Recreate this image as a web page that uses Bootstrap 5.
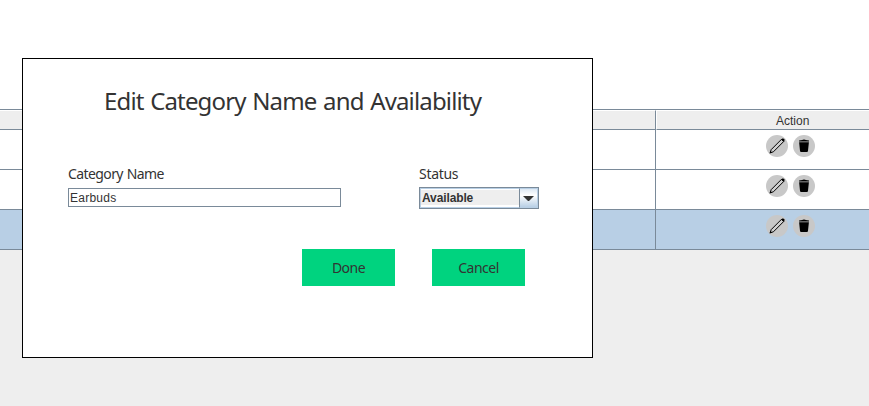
<!DOCTYPE html>
<html lang="en">
<head>
<meta charset="utf-8">
<title>Edit Category</title>
<link href="https://cdn.jsdelivr.net/npm/bootstrap@5.3.0/dist/css/bootstrap.min.css" rel="stylesheet">
<style>
body { background:#eee; color:#333; height:406px; overflow:hidden; font:14px/17px "Noto Sans",sans-serif; }
.top-space { height:109px; }
.grid-head { height:21px; border-top:1px solid #7a8a99; font:12px/18px "Liberation Sans",Arial,sans-serif; }
.grid-head > div { background:#eee; border-top:1px solid #fff; border-bottom:1px solid #7a8a99; }
.grid-line { height:40px; border-bottom:1px solid #7a8a99; }
.col-left { width:656px; border-right:1px solid #7a8a99; }
.grid-head .col-action { border-left:1px solid #fff; padding-left:119px; padding-top:1px; }
.grid-line .col-action { padding:5px 0 0 110px; gap:5px; }
.chosen { background:#b8cfe5; }
.round-btn { width:22px; height:22px; }
.dialog-box { left:22px; top:58px; width:571px; height:300px; border:1px solid #000; padding:27px 53px 0 45px; }
.dialog-title { font-size:24px; line-height:30px; margin:0 0 0 36px; letter-spacing:-.85px; word-spacing:1.2px; white-space:nowrap; font-weight:400; }
.fields { margin-top:49px; }
.name-field { width:273px; }
.status-field { width:120px; }
.field-label { display:block; height:22px; white-space:nowrap; letter-spacing:-.6px; word-spacing:.8px; }
.status-field .field-label { letter-spacing:-.3px; }
.name-input { height:19px; margin-top:1px; padding:1px 1px 0; border:1px solid #7a8a99; border-radius:0; color:#333; font:12px/16px "Liberation Sans",Arial,sans-serif; letter-spacing:.25px; }
.combo { height:22px; border:1px solid #7a8a99; box-shadow:inset 0 0 0 1px #b8cfe5; padding:1px; }
.combo-text { background:#eee; border-top:1px solid #fff; border-bottom:2px solid #fff; font:bold 12px/17px "Liberation Sans",Arial,sans-serif; padding-left:1px; letter-spacing:-.12px; }
.combo-arrow { width:19px; margin:-1px; border:1px solid #b8cfe5; border-left:1px solid #7a8a99; background:linear-gradient(#dde8f3,#fff 35%,#b8cfe5); }
.actions { margin:40px 14px 0 0; gap:37px; }
.action-btn { width:93px; height:37px; padding:1px 0 0; border:0; border-radius:0; background:#00d37f; color:#333; font-size:14px; line-height:36px; letter-spacing:-.5px; }
</style>
<script src="https://cdn.jsdelivr.net/npm/bootstrap@5.3.0/dist/js/bootstrap.bundle.min.js"></script>
</head>
<body class="position-relative">
<svg class="d-none">
  <symbol id="pencil" viewBox="0 0 22 22"><circle cx="11" cy="11" r="11" fill="#c8c8c8"/><path d="M4.200 17.800L5.200 14.600L15.600 4.200L17.800 6.400L7.400 16.800Z" fill="#d0d0d0" stroke="#000" stroke-width="1"/><path d="M15.200 4.600L16.300 3.600Q17.500 3.200 18.200 4T18.400 5.700L17.400 6.800ZM3.500 18.500L4.400 16L6 17.600Z" fill="#000"/></symbol>
  <symbol id="trash" viewBox="0 0 22 22"><circle cx="11" cy="11" r="11" fill="#c8c8c8"/><path d="M6 6.600V5.600L9.200 5Q9.500 4.400 11 4.400T12.800 5L16 5.600V6.600ZM6.100 7.300H15.900L15 15.800Q14.900 17 13.900 17H8.100Q7.100 17 7 15.800Z" fill="#000"/></symbol>
</svg>
<main>
  <div class="top-space bg-white"></div>
  <div class="grid-head d-flex"><div class="col-left"></div><div class="col-action flex-fill">Action</div></div>
  <div class="grid-line d-flex bg-white"><div class="col-left"></div><div class="col-action d-flex"><svg class="round-btn"><use href="#pencil"/></svg><svg class="round-btn"><use href="#trash"/></svg></div></div>
  <div class="grid-line d-flex bg-white"><div class="col-left"></div><div class="col-action d-flex"><svg class="round-btn"><use href="#pencil"/></svg><svg class="round-btn"><use href="#trash"/></svg></div></div>
  <div class="grid-line d-flex chosen"><div class="col-left"></div><div class="col-action d-flex"><svg class="round-btn"><use href="#pencil"/></svg><svg class="round-btn"><use href="#trash"/></svg></div></div>
</main>
<section class="dialog-box position-absolute bg-white" role="dialog">
  <h1 class="dialog-title">Edit Category Name and Availability</h1>
  <div class="fields d-flex justify-content-between">
    <div class="name-field"><label class="field-label" for="cat">Category Name</label><input id="cat" class="form-control name-input" value="Earbuds"></div>
    <div class="status-field"><span class="field-label">Status</span>
      <div class="combo d-flex"><div class="combo-text flex-fill">Available</div><div class="combo-arrow d-flex align-items-center justify-content-center"><svg width="11" height="5"><path d="M0 0h11L5.500 5.500z" fill="#333"/></svg></div></div>
    </div>
  </div>
  <div class="actions d-flex justify-content-end"><button class="btn action-btn">Done</button><button class="btn action-btn">Cancel</button></div>
</section>
</body>
</html>
